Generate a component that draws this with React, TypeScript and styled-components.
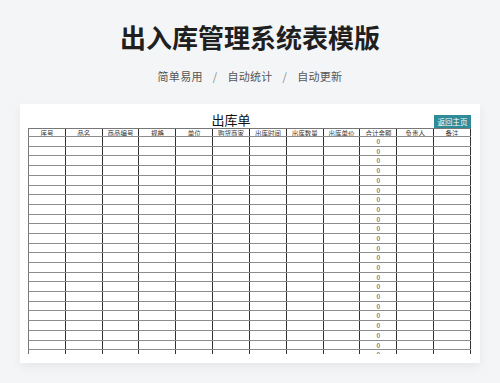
import styled, { createGlobalStyle } from 'styled-components'

const GlobalStyle = createGlobalStyle`
  html, body {
    margin: 0;
    padding: 0;
    background: #f4f5f7;
    font-family: "Noto Sans CJK SC", "Noto Sans", sans-serif;
  }
`

const Page = styled.div`
  width: 500px;
  height: 383px;
  overflow: hidden;
  display: flex;
  flex-direction: column;
  align-items: center;
`

const Title = styled.h1`
  margin: 22px 0 0;
  font-size: 26px;
  line-height: 30px;
  font-weight: 700;
  color: #1f1f1f;
`

const Tags = styled.div`
  margin-top: 16px;
  display: flex;
  align-items: center;
  font-size: 11px;
  line-height: 16px;
  letter-spacing: 0.3px;
  color: #555;
`

const Sep = styled.span`
  margin: 0 10px;
  color: #888;
`

const Card = styled.div`
  margin-top: 20px;
  width: 460px;
  height: 259px;
  background: #fff;
  box-shadow: 0 4px 10px rgba(0, 0, 0, 0.06);
  display: flex;
  flex-direction: column;
  padding: 8px 9px 0 8px;
  box-sizing: border-box;
`

const Sheet = styled.div`
  width: 443px;
  height: 242px;
  overflow: hidden;
`

const TopRow = styled.div`
  display: grid;
  grid-template-columns: 406px 37px;
  height: 15.5px;
  align-items: end;
`

const SheetTitle = styled.div`
  text-align: center;
  font-size: 13px;
  line-height: 15px;
  color: #111;
  padding-bottom: 1px;
`

const BackButton = styled.button`
  height: 13.5px;
  margin: 0;
  padding: 0;
  border: none;
  background: #2f8b98;
  color: #fff;
  font-family: inherit;
  font-size: 7.5px;
  line-height: 13px;
  white-space: nowrap;
`

const Row = styled.div<{ $head?: boolean }>`
  display: grid;
  grid-template-columns: repeat(12, 1fr);
  height: ${p => (p.$head ? '9.6px' : '9.7px')};
  box-sizing: border-box;
  border-bottom: 1px solid #8c8c8c;
  border-left: 1px solid #777;
  ${p => p.$head && 'border-top: 1px solid #777;'}
`

const Cell = styled.div`
  border-right: 1px solid #333;
  font-size: 6.5px;
  line-height: 8.5px;
  text-align: center;
  color: #333;
  white-space: nowrap;
  overflow: hidden;
`

const headers = ['序号', '品名', '商品编号', '规格', '单位', '购货商家', '出库时间', '出库数量', '出库单价', '合计金额', '负责人', '备注']

function App() {
  const rows = Array.from({ length: 24 }, (_, i) => i)

  return (
    <>
      <GlobalStyle />
      <Page>
        <Title>出入库管理系统表模版</Title>
        <Tags>
          <span>简单易用</span>
          <Sep>/</Sep>
          <span>自动统计</span>
          <Sep>/</Sep>
          <span>自动更新</span>
        </Tags>
        <Card>
          <Sheet>
            <TopRow>
              <SheetTitle>出库单</SheetTitle>
              <BackButton>返回主页</BackButton>
            </TopRow>
            <Row $head>
              {headers.map(h => (
                <Cell key={h}>{h}</Cell>
              ))}
            </Row>
            {rows.map(r => (
              <Row key={r}>
                {headers.map((h, i) => (
                  <Cell key={h}>{i === 9 ? '0' : ''}</Cell>
                ))}
              </Row>
            ))}
          </Sheet>
        </Card>
      </Page>
    </>
  )
}

export default App
